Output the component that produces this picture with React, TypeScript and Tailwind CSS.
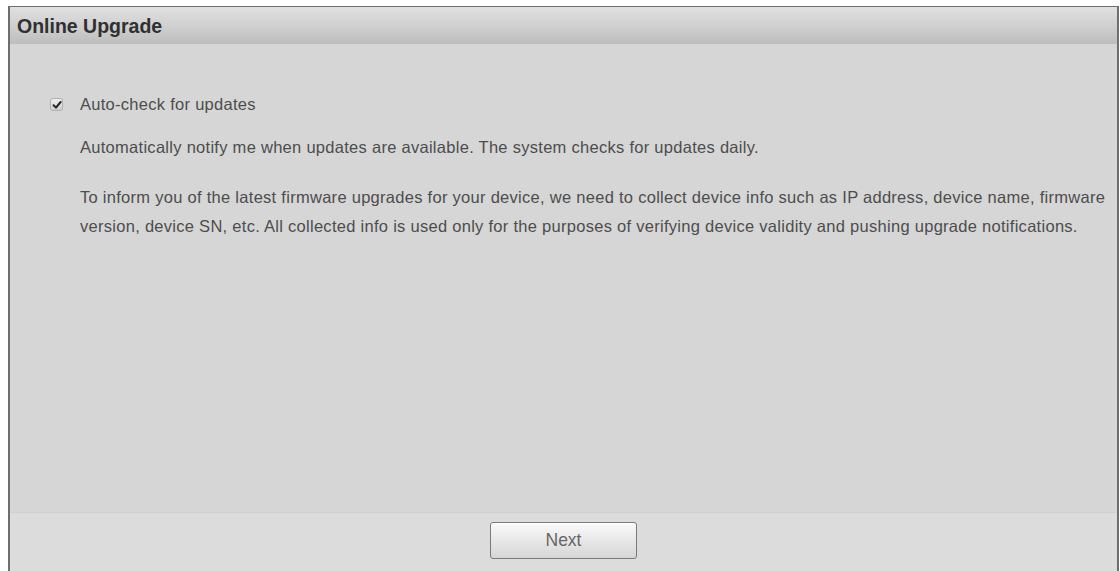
import React from "react";

function CheckIcon() {
  return (
    <span className="flex h-[13px] w-[13px] items-center justify-center rounded-[3px] border border-[#b0b0b0] bg-gradient-to-b from-[#f0f0f0] to-[#cfcfcf]">
      <svg width="10" height="10" viewBox="0 0 10 10">
        <path d="M1.6 5.2 L4 7.6 L8.6 2" fill="none" stroke="#262626" strokeWidth="2" strokeLinecap="round" strokeLinejoin="round" />
      </svg>
    </span>
  );
}

export default function App() {
  return (
    <div
      className="h-[571px] w-[1120px] bg-white pl-[8px] pr-[1px] pt-[6px]"
      style={{ fontFamily: '"Liberation Sans", Arial, sans-serif' }}
    >
      <div className="flex h-full flex-col border-l-2 border-r-2 border-t border-[#6e6e6e] bg-[#d6d6d6]">
        {/* title bar */}
        <div className="flex h-[37px] shrink-0 items-center bg-gradient-to-b from-[#e0e0e0] via-[#d0d0d0] to-[#bdbdbd] pl-[7px] pt-[3px] text-[19.5px] font-bold text-[#303030]">
          Online Upgrade
        </div>

        {/* settings */}
        <div className="flex-1 pl-[40px] pr-[10px] pt-[46px] text-[16.5px] tracking-[0.28px] text-[#4d4d4d]">
          <label className="flex h-[29px] items-center gap-[17px]">
            <CheckIcon />
            <span>Auto-check for updates</span>
          </label>
          <p className="mt-[14px] pl-[30px] leading-[29px]">
            Automatically notify me when updates are available. The system checks for updates daily.
          </p>
          <p className="mt-[21px] whitespace-nowrap pl-[30px] leading-[29px]">
            To inform you of the latest firmware upgrades for your device, we need to collect device info such as IP address, device name, firmware
            <br />
            version, device SN, etc. All collected info is used only for the purposes of verifying device validity and pushing upgrade notifications.
          </p>
        </div>

        {/* footer */}
        <div className="flex h-[59px] shrink-0 justify-center border-t border-[#d0d0d0] bg-[#dcdcdc] pt-[9px]">
          <button className="h-[37px] w-[147px] rounded-[3px] border border-[#7a7a7a] bg-gradient-to-b from-[#fafafa] to-[#d6d6d6] text-[17.5px] text-[#666] shadow-[inset_0_1px_0_#fff]">
            Next
          </button>
        </div>
      </div>
    </div>
  );
}
